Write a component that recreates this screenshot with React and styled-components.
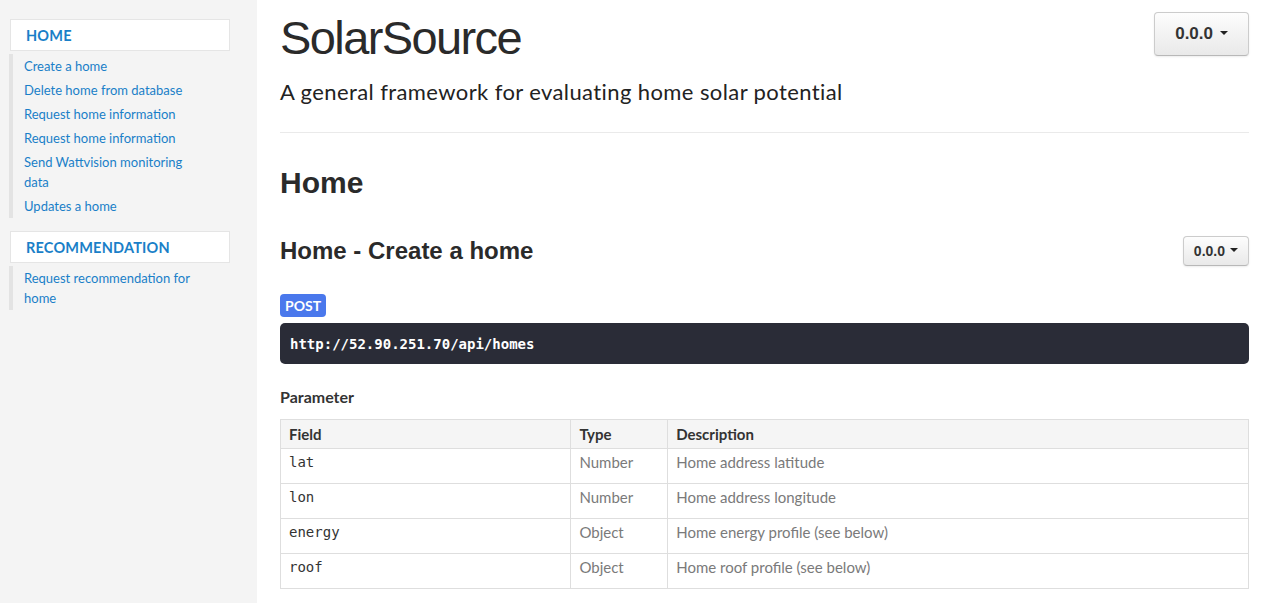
import React from "react";
import styled, { createGlobalStyle } from "styled-components";

const GlobalStyle = createGlobalStyle`
  html, body {
    margin: 0;
    padding: 0;
    background: #fff;
  }
  body {
    font-family: Lato, "Open Sans", sans-serif;
    color: #333;
  }
`;

const Page = styled.div`
  display: flex;
  min-height: 603px;
`;

const Sidebar = styled.nav`
  width: 257px;
  flex-shrink: 0;
  background: #f4f4f4;
  padding: 19px 27px 0 9px;
  box-sizing: border-box;
`;

const NavHeader = styled.div`
  margin-left: 1px;
  background: #fff;
  border: 1px solid #e5e5e5;
  height: 32px;
  box-sizing: border-box;
  padding-left: 15px;
  display: flex;
  align-items: center;
  font-weight: 700;
  font-size: 14.5px;
  color: #1a7fc8;
  letter-spacing: 0.2px;
  margin-top: ${(p) => (p.$first ? "0" : "13px")};
`;

const NavList = styled.ul`
  list-style: none;
  margin: 3px 0 0;
  padding: 0 0 0 11px;
  border-left: 4px solid #e3e3e3;
`;

const NavItem = styled.li`
  padding: 2px 0;
  width: 180px;
  font-size: 13px;
  line-height: 20px;
  color: #1a7fc8;
`;

const Main = styled.main`
  flex: 1;
  padding: 0 38px 0 23px;
  min-width: 0;
`;

const HeaderRow = styled.div`
  display: flex;
  justify-content: space-between;
  align-items: flex-start;
`;

const Title = styled.h1`
  margin: 10px 0 0;
  font-family: "Liberation Sans", Arial, sans-serif;
  font-weight: 400;
  font-size: 47px;
  letter-spacing: -1.6px;
  line-height: 56px;
  color: #2a2a2a;
`;

const VersionButton = styled.button`
  display: inline-flex;
  align-items: center;
  gap: ${(p) => (p.$small ? "5px" : "7px")};
  margin-top: ${(p) => (p.$small ? "0" : "12px")};
  height: ${(p) => (p.$small ? "30px" : "44px")};
  padding: ${(p) => (p.$small ? "0 10px" : "0 20px")};
  border: 1px solid #ccc;
  border-bottom-color: #b8b8b8;
  border-radius: 4px;
  background: linear-gradient(#fdfdfd, #e9e9e9);
  box-shadow: inset 0 1px 0 rgba(255, 255, 255, 0.3), 0 1px 2px rgba(0, 0, 0, 0.08);
  font-family: "Liberation Sans", Arial, sans-serif;
  font-weight: 700;
  font-size: ${(p) => (p.$small ? "14px" : "17px")};
  color: #333;
`;

const Caret = styled.span`
  width: 0;
  height: 0;
  border-left: 4px solid transparent;
  border-right: 4px solid transparent;
  border-top: 4px solid #222;
  margin-top: -2px;
`;

const Subtitle = styled.p`
  margin: 10px 0 0;
  font-size: 22px;
  letter-spacing: 0.4px;
  line-height: 32px;
  color: #222;
`;

const Rule = styled.hr`
  margin: 24px 0 0;
  border: 0;
  border-top: 1px solid #eaeaea;
`;

const SectionTitle = styled.h2`
  margin: 30px 0 0;
  font-family: "Liberation Sans", Arial, sans-serif;
  font-weight: 700;
  font-size: 30px;
  line-height: 40px;
  color: #2a2a2a;
`;

const ArticleHead = styled.div`
  display: flex;
  justify-content: space-between;
  align-items: flex-start;
  margin-top: 33px;
`;

const ArticleTitle = styled.h3`
  margin: 0;
  font-family: "Liberation Sans", Arial, sans-serif;
  font-weight: 700;
  font-size: 24px;
  line-height: 30px;
  color: #2a2a2a;
`;

const Badge = styled.span`
  display: inline-block;
  margin-top: 28px;
  padding: 0 5px;
  height: 23px;
  line-height: 23px;
  border-radius: 4px;
  background: #4a78ec;
  color: #fff;
  font-weight: 700;
  font-size: 14px;
`;

const Code = styled.pre`
  margin: 6px 0 0;
  height: 41px;
  box-sizing: border-box;
  padding: 0 10px;
  display: flex;
  align-items: center;
  background: #2a2c37;
  border-radius: 5px;
  color: #fff;
  font-family: "DejaVu Sans Mono", monospace;
  font-weight: 700;
  font-size: 14px;
`;

const Label = styled.h4`
  margin: 22px 0 0;
  font-size: 16px;
  font-weight: 700;
  line-height: 22px;
  color: #333;
`;

const Table = styled.table`
  margin-top: 11px;
  width: 100%;
  border-collapse: collapse;
  table-layout: fixed;
  font-size: 15px;
`;

const Th = styled.th`
  box-sizing: border-box;
  text-align: left;
  background: #f5f5f5;
  border: 1px solid #dedede;
  padding: 4px 8px;
  line-height: 20px;
  font-weight: 700;
  color: #333;
  width: ${(p) => p.$w || "auto"};
`;

const Td = styled.td`
  border: 1px solid #dedede;
  padding: 3px 8px 11px;
  line-height: 20px;
  vertical-align: top;
  color: ${(p) => (p.$mono ? "#333" : "#7a7a7a")};
  font-family: ${(p) => (p.$mono ? '"DejaVu Sans Mono", monospace' : "inherit")};
  font-size: ${(p) => (p.$mono ? "14px" : "15px")};
`;

const nav = [
  {
    title: "HOME",
    items: [
      "Create a home",
      "Delete home from database",
      "Request home information",
      "Request home information",
      "Send Wattvision monitoring data",
      "Updates a home",
    ],
  },
  { title: "RECOMMENDATION", items: ["Request recommendation for home"] },
];

const params = [
  ["lat", "Number", "Home address latitude"],
  ["lon", "Number", "Home address longitude"],
  ["energy", "Object", "Home energy profile (see below)"],
  ["roof", "Object", "Home roof profile (see below)"],
];

export default function App() {
  return (
    <>
      <GlobalStyle />
      <Page>
        <Sidebar>
          {nav.map((group, i) => (
            <div key={group.title}>
              <NavHeader $first={i === 0}>{group.title}</NavHeader>
              <NavList>
                {group.items.map((item, j) => (
                  <NavItem key={j}>{item}</NavItem>
                ))}
              </NavList>
            </div>
          ))}
        </Sidebar>
        <Main>
          <HeaderRow>
            <Title>SolarSource</Title>
            <VersionButton>
              0.0.0 <Caret />
            </VersionButton>
          </HeaderRow>
          <Subtitle>A general framework for evaluating home solar potential</Subtitle>
          <Rule />
          <SectionTitle>Home</SectionTitle>
          <ArticleHead>
            <ArticleTitle>Home - Create a home</ArticleTitle>
            <VersionButton $small>
              0.0.0 <Caret />
            </VersionButton>
          </ArticleHead>
          <Badge>POST</Badge>
          <Code>http://52.90.251.70/api/homes</Code>
          <Label>Parameter</Label>
          <Table>
            <thead>
              <tr>
                <Th $w="30%">Field</Th>
                <Th $w="10%">Type</Th>
                <Th>Description</Th>
              </tr>
            </thead>
            <tbody>
              {params.map(([field, type, desc]) => (
                <tr key={field}>
                  <Td $mono>{field}</Td>
                  <Td>{type}</Td>
                  <Td>{desc}</Td>
                </tr>
              ))}
            </tbody>
          </Table>
        </Main>
      </Page>
    </>
  );
}
